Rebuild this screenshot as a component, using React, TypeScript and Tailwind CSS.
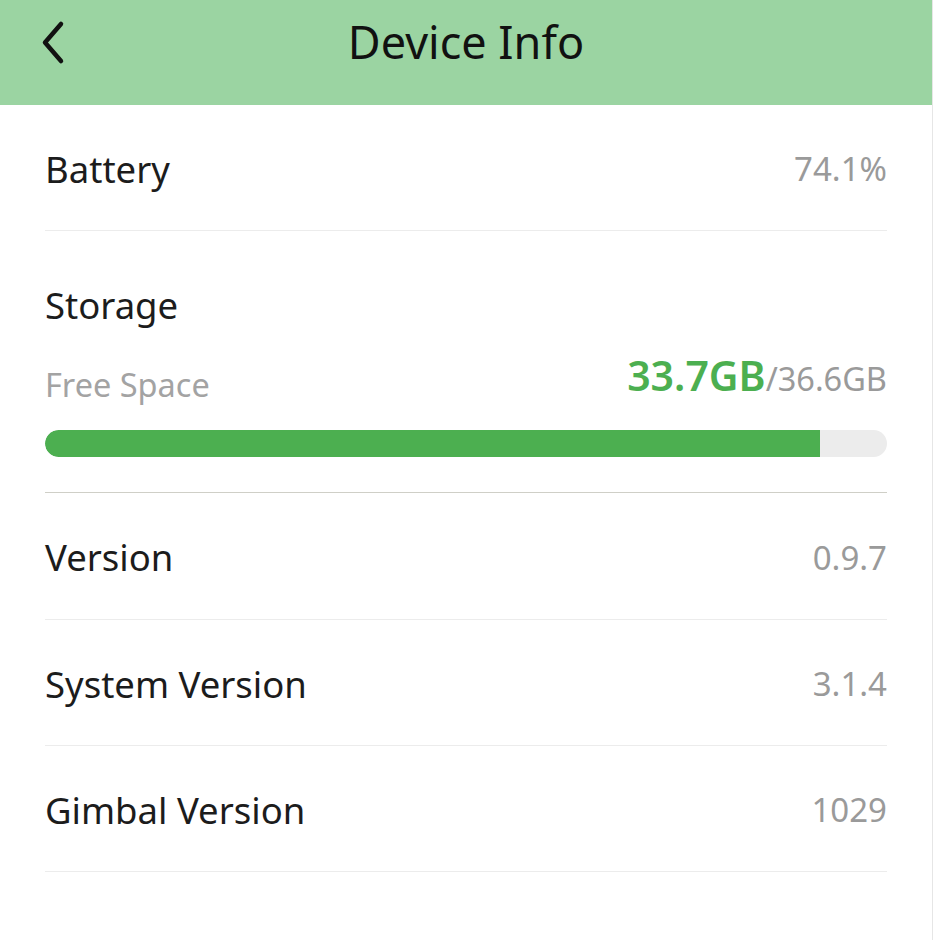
import React from "react";

const font = { fontFamily: '"Noto Sans", "Open Sans", sans-serif' };

function Row({ label, value, h = "h-[126px]" }: { label: string; value: string; h?: string }) {
  return (
    <div className={`flex ${h} items-center justify-between border-b border-[#ececec] pt-[3px]`}>
      <span className="text-[36.5px] text-[#1c1c1c]">{label}</span>
      <span className="text-[33px] text-[#9a9a9a]">{value}</span>
    </div>
  );
}

export default function App() {
  return (
    <div className="w-[933px] h-[940px] bg-white border-r border-[#e6e6e6]" style={font}>
      <div className="relative flex h-[105px] items-center justify-center bg-[#9bd4a2]">
        <svg
          className="absolute left-[40px] top-[20px]"
          width="27"
          height="46"
          viewBox="0 0 27 46"
          fill="none"
          stroke="#111"
          strokeWidth="4.5"
          strokeLinecap="round"
          strokeLinejoin="round"
        >
          <path d="M21 4 L5 22.5 L21 41" />
        </svg>
        <span className="-mt-[22px] text-[45px] text-[#111]">Device Info</span>
      </div>
      <div className="pl-[45px] pr-[45px]">
        <Row label="Battery" value="74.1%" />
        <div className="border-b border-[#cfcfc7] pb-[35px]">
          <div className="pt-[50px] text-[36.5px] text-[#1c1c1c] leading-[48px]">Storage</div>
          <div className="mt-[24px] flex items-end justify-between leading-[44px]">
            <span className="text-[32.5px] text-[#a3a3a3]">Free Space</span>
            <span>
              <span className="text-[41px] font-semibold text-[#4caf50]">33.7GB</span>
              <span className="text-[32.5px] text-[#9a9a9a]">/36.6GB</span>
            </span>
          </div>
          <div className="mt-[23px] h-[27px] w-full overflow-hidden rounded-full bg-[#ececec]">
            <div className="h-full rounded-l-full bg-[#4caf50]" style={{ width: `${(33.7 / 36.6) * 100}%` }} />
          </div>
        </div>
        <Row label="Version" value="0.9.7" h="h-[127px]" />
        <Row label="System Version" value="3.1.4" />
        <Row label="Gimbal Version" value="1029" />
      </div>
    </div>
  );
}
